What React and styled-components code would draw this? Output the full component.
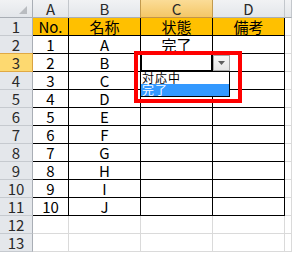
import React from 'react';
import styled, { createGlobalStyle } from 'styled-components';

const GlobalStyle = createGlobalStyle`
  body {
    margin: 0;
    background: #fff;
    font-family: "Noto Sans CJK JP", "Noto Sans", sans-serif;
  }
`;

const Sheet = styled.div`
  position: relative;
  width: 292px;
  height: 253px;
  overflow: hidden;
  display: grid;
  grid-template-columns: 33px 36px 72px 72px 72px 7px;
  grid-auto-rows: 18px;
  background: #fff;
`;

const Corner = styled.div`
  box-sizing: border-box;
  display: flex;
  align-items: flex-end;
  justify-content: flex-end;
  padding: 0 5px 3px 0;
  background: linear-gradient(to bottom, #f1f2f4, #e3e6ea);
  border-right: 1px solid #a9aeb5;
  border-bottom: 1px solid #a9aeb5;
`;

const ColHeader = styled.div`
  box-sizing: border-box;
  background: ${p => p.$active
    ? 'linear-gradient(to bottom, #fbdc97, #f4c767)'
    : 'linear-gradient(to bottom, #f1f2f4, #e3e6ea)'};
  border-right: 1px solid ${p => p.$active ? '#c29a4e' : '#c3c7cc'};
  border-bottom: 1px solid ${p => p.$active ? '#c2954a' : '#a9aeb5'};
  box-shadow: ${p => p.$active ? '-1px 0 0 #c29a4e' : 'none'};
  color: #2a2a2a;
  font-size: 15px;
  line-height: 17px;
  text-align: center;
`;

const RowHeader = styled.div`
  box-sizing: border-box;
  background: ${p => p.$active ? '#fdd970' : '#e4e7eb'};
  border-right: 1px solid ${p => p.$active ? '#d9a240' : '#a9aeb5'};
  border-bottom: 1px solid ${p => p.$active ? '#e0a944' : '#c6cacf'};
  box-shadow: ${p => p.$active ? '0 -1px 0 #e0a944' : 'none'};
  color: #2a2a2a;
  font-size: 15px;
  line-height: 17px;
  text-align: center;
`;

const Cell = styled.div`
  box-sizing: border-box;
  border-right: 1px solid ${p => p.$table ? '#000' : '#dadada'};
  border-bottom: 1px solid ${p => p.$table ? '#000' : '#dadada'};
  background: ${p => p.$fill ? '#ffc000' : '#fff'};
  color: #000;
  font-size: 15px;
  line-height: 17px;
  text-align: center;
  white-space: nowrap;
`;

// data-validation dropdown, drawn over the grid at cell C3
const ActiveCell = styled.div`
  position: absolute;
  left: 140px;
  top: 53px;
  width: 73px;
  height: 19px;
  box-sizing: border-box;
  border: 2px solid #000;
`;

const DropButton = styled.div`
  position: absolute;
  left: 213px;
  top: 55px;
  width: 17px;
  height: 16px;
  box-sizing: border-box;
  border: 1px solid #a6a6a6;
  background: linear-gradient(to bottom, #f7f7f7, #e6e6e6);
  display: flex;
  align-items: center;
  justify-content: center;
`;

const ListBox = styled.div`
  position: absolute;
  left: 140px;
  top: 71px;
  width: 90px;
  box-sizing: border-box;
  border: 1px solid #000;
  background: #fff;
  display: flex;
  flex-direction: column;
`;

const ListItem = styled.div`
  height: 12px;
  padding-left: 1px;
  font-size: 12px;
  letter-spacing: 1px;
  line-height: 12px;
  color: ${p => p.$selected ? '#fff' : '#000'};
  background: ${p => p.$selected ? '#3399ff' : '#fff'};
  white-space: nowrap;
`;

const Highlight = styled.div`
  position: absolute;
  left: 134px;
  top: 51px;
  width: 108px;
  height: 52px;
  box-sizing: border-box;
  border: 4px solid #ff0000;
`;

const cols = ['A', 'B', 'C', 'D', 'E'];
const heads = ['No.', '名称', '状態', '備考'];
const letters = ['A', 'B', 'C', 'D', 'E', 'F', 'G', 'H', 'I', 'J'];

function rowValues(r) {
  if (r === 1) return heads;
  if (r >= 2 && r <= 11) {
    const i = r - 2;
    return [String(i + 1), letters[i], r === 2 ? '完了' : '', ''];
  }
  return ['', '', '', ''];
}

export default function App() {
  const rows = Array.from({ length: 13 }, (_, i) => i + 1);
  return (
    <>
      <GlobalStyle />
      <Sheet>
        <Corner>
          <svg width="8" height="8" viewBox="0 0 8 8">
            <polygon points="8,0 8,8 0,8" fill="#b9bcc0" />
          </svg>
        </Corner>
        {cols.map(c => (
          <ColHeader key={c} $active={c === 'C'}>{c === 'E' ? '' : c}</ColHeader>
        ))}
        {rows.map(r => {
          const vals = rowValues(r);
          const inTable = r <= 11;
          return (
            <React.Fragment key={r}>
              <RowHeader $active={r === 3}>{r}</RowHeader>
              {vals.map((v, i) => (
                <Cell key={i} $table={inTable} $fill={r === 1}>{v}</Cell>
              ))}
              <Cell />
            </React.Fragment>
          );
        })}

        <ActiveCell />
        <DropButton>
          <svg width="7" height="4" viewBox="0 0 7 4">
            <polygon points="0,0 7,0 3.5,4" fill="#5f5f5f" />
          </svg>
        </DropButton>
        <ListBox>
          <ListItem>対応中</ListItem>
          <ListItem $selected>完了</ListItem>
        </ListBox>
        <Highlight />
      </Sheet>
    </>
  );
}
